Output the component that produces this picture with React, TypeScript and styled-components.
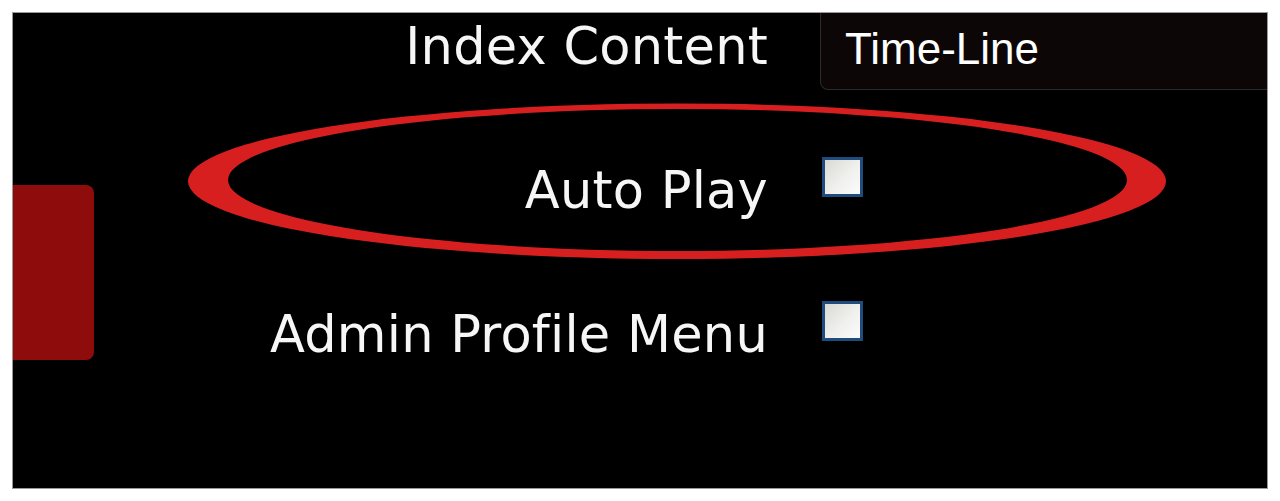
import styled, { createGlobalStyle } from 'styled-components'

const GlobalStyle = createGlobalStyle`
  html, body {
    margin: 0;
    padding: 0;
    background: #ffffff;
  }
`

const Panel = styled.div`
  position: relative;
  box-sizing: border-box;
  display: flex;
  flex-direction: row;
  margin: 12px 0 0 12px;
  width: 1256px;
  height: 477px;
  border: 1px solid #9a9a9a;
  background-color: #000000;
  overflow: hidden;
`

const SideTab = styled.div`
  flex-shrink: 0;
  width: 81px;
  height: 175px;
  margin-top: 172px;
  background-color: #8f0c0c;
  border-radius: 0 8px 8px 0;
`

const Form = styled.div`
  display: flex;
  flex-direction: column;
  flex: 1;
  min-width: 0;
`

const FieldRow = styled.div<{ height: number; offset?: number }>`
  display: grid;
  grid-template-columns: 674px 1fr;
  column-gap: 52px;
  align-items: start;
  height: ${({ height }) => height}px;
  margin-top: ${({ offset }) => offset ?? 0}px;
`

const Label = styled.label`
  margin-top: 4px;
  text-align: right;
  font-family: 'DejaVu Sans', Verdana, sans-serif;
  font-size: 51px;
  line-height: 60px;
  letter-spacing: 0.25px;
  color: #f6f6f6;
  white-space: nowrap;
`

const TextField = styled.input`
  box-sizing: border-box;
  width: calc(100% + 12px);
  height: 77px;
  padding: 0 0 4px 24px;
  border: 1px solid #2e2a2a;
  border-top: none;
  border-radius: 0 0 0 8px;
  background-color: #0c0606;
  color: #ffffff;
  font-family: 'Liberation Sans', Arial, sans-serif;
  font-size: 44px;
  outline: none;
`

const CheckBox = styled.input`
  appearance: none;
  box-sizing: border-box;
  width: 41px;
  height: 40px;
  margin: 0 0 0 2px;
  border: 3px solid #1f4c7c;
  background: linear-gradient(135deg, #d9d9d5 0%, #f0f0ee 55%, #fbfbfb 100%);
`

const Highlight = styled.svg`
  position: absolute;
  left: 175px;
  top: 90px;
  width: 980px;
  height: 158px;
  pointer-events: none;
`

const App = () => {
  return (
    <>
      <GlobalStyle />
      <Panel>
        <SideTab />
        <Form>
          <FieldRow height={77}>
            <Label htmlFor="index-content">Index Content</Label>
            <TextField id="index-content" defaultValue="Time-Line" readOnly />
          </FieldRow>
          <FieldRow height={144} offset={67}>
            <Label htmlFor="auto-play">Auto Play</Label>
            <CheckBox id="auto-play" type="checkbox" />
          </FieldRow>
          <FieldRow height={144}>
            <Label htmlFor="admin-menu">Admin Profile Menu</Label>
            <CheckBox id="admin-menu" type="checkbox" />
          </FieldRow>
        </Form>
        <Highlight viewBox="0 0 980 158">
          <path
            fill="#d81f1f"
            fillRule="evenodd"
            d="M0,78.25 a489,77.75 0 1,0 978,0 a489,77.75 0 1,0 -978,0 Z M40,77 a449.5,71 0 1,0 899,0 a449.5,71 0 1,0 -899,0 Z"
          />
        </Highlight>
      </Panel>
    </>
  )
}

export default App
